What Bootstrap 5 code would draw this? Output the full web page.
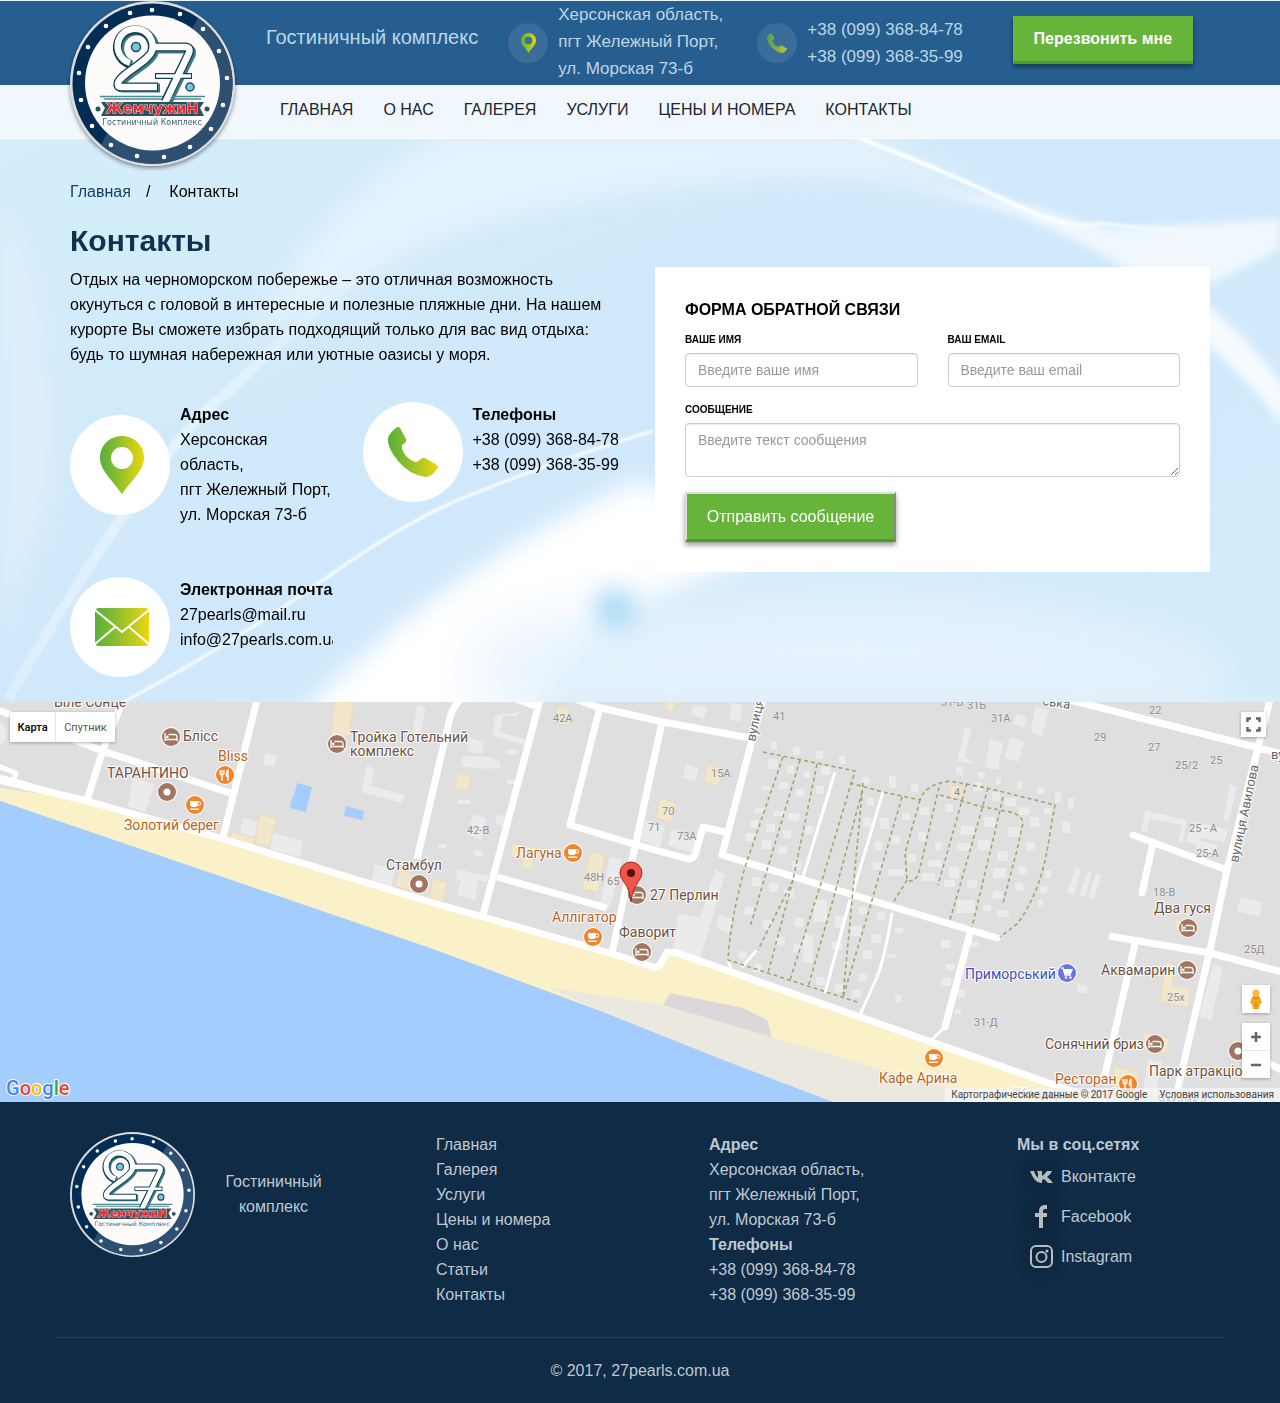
<!DOCTYPE html>
<html lang="ru">
<head>
<meta charset="utf-8">
<meta name="viewport" content="width=device-width, initial-scale=1">
<title>Контакты</title>
<link href="https://cdn.jsdelivr.net/npm/bootstrap@5.3.0/dist/css/bootstrap.min.css" rel="stylesheet">
<style>
body{font-family:"Liberation Sans",Arial,sans-serif;font-size:16px;line-height:25px;color:#000;background:#102b45}
a{color:inherit;text-decoration:none}
.container,.row{--bs-gutter-x:30px}
.container{max-width:1170px}
.topbar{background:#265f8f;border-top:1px solid #eaf6fd;color:#bfd5e6;height:85px}
.topbar .container{padding-left:211px}
.brand-title{font-size:20px;margin:0 30px 12px 0}
.top-info{font-size:17px;line-height:27px;gap:10px}
.top-address{margin-right:34px}
.top-phone{margin-right:50px}
.round-sm{width:40px;height:40px;background:#3a6d9a}
.brand-logo{position:absolute;top:0;left:15px;width:165px;height:165px;border-radius:50%;box-shadow:0 2px 4px rgba(0,0,0,.45);z-index:3}
.btn-call,.btn-send{background:#66b53a;color:#fff;border-radius:0;line-height:24px}
.btn-call{font-weight:700;border:0;border-bottom:3px solid #509a2b;width:180px;height:48px;padding:0;margin-bottom:6px;box-shadow:0 3px 5px rgba(0,0,0,.4)}
.btn-call:hover,.btn-send:hover{background:#5aa632;color:#fff}
.mainnav{background:#f0f8fe;border-bottom:1px solid #fff;height:54px}
.mainnav .nav{gap:30px;padding-left:210px}
.mainnav .nav-link{color:#1c242c;padding:12px 0 16px}
.page{background:#d3eafa;position:relative;overflow:hidden;padding:40px 0 25px}
.page-bg{position:absolute;inset:0;width:100%;height:100%}
.crumbs{gap:15px}
.crumbs a{color:#173f61}
h1{font-size:30px;line-height:33px;font-weight:700;color:#12314f;margin:20px 0 10px}
.contact-grid{margin-top:35px;row-gap:50px}
.round-lg{width:100px;height:100px;background:#fff;flex:none}
.contact-item{gap:10px}
.contact-text{min-width:0;overflow:hidden}
.feedback{background:#fff;padding:30px}
.feedback h2{font-size:16px;line-height:25px;font-weight:700;margin:0 0 10px}
.feedback label{display:block;font-size:10px;line-height:15px;font-weight:700;margin-bottom:6px}
.feedback .message-label{margin-top:15px}
.feedback .form-control{height:34px;border:1px solid #ccc;border-radius:4px;padding:6px 12px;font-size:14px;line-height:20px;box-shadow:inset 0 1px 1px rgba(0,0,0,.075)}
.feedback textarea.form-control{height:54px;resize:vertical}
.feedback .form-control::placeholder{color:#999}
.btn-send{display:block;border:2px outset #ddd;border-bottom:3px solid #509a2b;width:211px;height:50px;padding:0;margin-top:15px;box-shadow:0 3px 5px rgba(0,0,0,.4)}
.map{height:400px;position:relative;overflow:hidden;font-family:Roboto,sans-serif}
.map-canvas{display:block;width:100%;height:100%}
.poi{font-size:14px;fill:#6d5140;stroke:#fff;stroke-width:2px;paint-order:stroke;stroke-linejoin:round}
.poi-food{fill:#b8631a}
.poi-shop{fill:#3c50c0}
.num{font-size:11px;fill:#8d8d8d;stroke:#eee;stroke-width:1px;paint-order:stroke}
.street{font-size:13px;fill:#666;stroke:#fff;stroke-width:2px;paint-order:stroke}
.glogo{font-size:20px;font-weight:500;stroke:#fff;stroke-width:2px;paint-order:stroke}
.map-ctl{position:absolute;box-shadow:0 1px 3px rgba(0,0,0,.3);background:#fff}
.map-ctl button{border:0;background:#fff;padding:0;font-size:11px;line-height:29px;height:30px;display:block;color:#565656}
.ctl-type{top:10px;left:10px;height:30px}
.ctl-type .type-map{width:45px;font-weight:500;color:#000}
.ctl-type .type-sat{width:60px;border-left:1px solid #e6e6e6}
.ctl-full{top:10px;right:14px}
.ctl-full button{width:25px;height:25px}
.ctl-man{right:10px;bottom:89px}
.ctl-man button{width:28px;height:28px}
.ctl-zoom{right:10px;bottom:24px}
.ctl-zoom button{width:28px;height:27px}
.ctl-zoom .zoom-out{border-top:1px solid #e6e6e6;height:28px}
.map-ctl svg{display:block;margin:auto}
.map-legal{position:absolute;right:0;bottom:0;background:rgba(245,245,245,.75);font-size:10px;line-height:14px;color:#444;padding:0 6px;gap:12px}
.foot{background:#102b45;color:#bfc8d1;padding:30px 0 20px}
.foot-grid{display:grid;grid-template-columns:366fr 273fr 308fr 193fr}
.foot-logo{width:125px;height:125px;flex:none}
.foot-brand{gap:30px}
.foot-name{width:97px;padding-top:37px}
.social{gap:15px;padding:7px 0 0 13px}
.social a{gap:8px}
.social-icon{display:flex;border-radius:50%;box-shadow:0 0 10px 6px #0d273f;background:#0d273f}
.foot-line{border-top:1px solid #263f57;margin-top:30px;padding-top:20px}
</style>
<script src="https://cdn.jsdelivr.net/npm/bootstrap@5.3.0/dist/js/bootstrap.bundle.min.js"></script>
</head>
<body>

<svg width="0" height="0" class="position-absolute" aria-hidden="true">
  <defs>
    <linearGradient id="lime"><stop offset="0" stop-color="#58b03a"/><stop offset=".35" stop-color="#84bc30"/><stop offset="1" stop-color="#ecd70e"/></linearGradient>
    <symbol id="logo" viewBox="0 0 165 165">
      <circle cx="82.500" cy="82.500" r="82.500" fill="#dcdcdc"/>
      <circle cx="82.500" cy="82.500" r="80" fill="#042d55"/>
      <path d="M128 17A80 80 0 1 1 31 144L41 125L118 35Z" fill="#2d4f72"/>
      <circle cx="82.500" cy="82" r="67.500" fill="#fdfcfb"/>
      <g fill="#fff"><circle cx="82" cy="9" r="2.300"/><circle cx="110" cy="13" r="2.300"/><circle cx="133" cy="28" r="2.300"/><circle cx="149" cy="50" r="2.300"/><circle cx="157" cy="77" r="2.300"/><circle cx="153" cy="104" r="2.300"/><circle cx="141" cy="128" r="2.300"/><circle cx="120" cy="146" r="2.300"/><circle cx="94" cy="156" r="2.300"/><circle cx="67" cy="155" r="2.300"/><circle cx="41" cy="144" r="2.300"/><circle cx="22" cy="125" r="2.300"/><circle cx="11" cy="99" r="2.300"/><circle cx="9" cy="72" r="2.300"/><circle cx="18" cy="46" r="2.300"/><circle cx="36" cy="25" r="2.300"/><circle cx="60" cy="12" r="2.300"/></g>
      <g fill="none" stroke-linejoin="round">
        <g stroke="#3b7a86" stroke-width="9"><path d="M62 64A17.500 17.500 0 1 1 84 52C80 63 52 75 50 84Q49 87 53 87H90"/><path d="M83 48H117Q123 48 121 54L97 103"/></g>
        <g stroke="#123f50" stroke-width="9"><path d="M60 63A17.500 17.500 0 1 1 82 50C78 61 50 73 48 82Q47 86 51 86H88"/><path d="M80 46H115Q121 46 119 52L95 101"/><path d="M85 75H122" stroke-width="6"/></g>
        <g stroke="#fff" stroke-width="6.500"><path d="M60 62A17.500 17.500 0 1 1 82 50C78 61 50 73 48 82Q47 86 51 86H87"/><path d="M81 46H115Q121 46 119 52L95 102"/><path d="M86 75H121" stroke-width="3.500"/></g>
      </g>
      <circle cx="67" cy="46" r="10" fill="#fdfcfb"/>
      <circle cx="66" cy="46" r="4.500" fill="#7cc5dc" stroke="#1c4b5a" stroke-width="1.500"/>
      <circle cx="120" cy="86" r="4" fill="#7cc5dc" stroke="#1c4b5a" stroke-width="1.500"/>
      <path d="M30 95.500H93M102 95.500H135M34 98H91M101 98H131" stroke="#4d8991" stroke-width="1.500"/>
      <path d="M31 101H134L130 107L134 115H31L35 107Z" fill="#25535f"/>
      <circle cx="28" cy="108" r="2.500" fill="#25535f"/><circle cx="137" cy="108" r="2.500" fill="#25535f"/>
      <text x="82" y="112" text-anchor="middle" font-family="DejaVu Sans,sans-serif" font-weight="700" font-size="14" fill="#e62e36" stroke="#f4dada" stroke-width="1" paint-order="stroke">ЖемчужиН</text>
      <text x="82" y="124" text-anchor="middle" font-family="DejaVu Sans,sans-serif" font-size="8" fill="#3d6472">Гостиничный Комплекс</text>
    </symbol>
    <symbol id="pin" viewBox="0 0 44 58"><path fill="url(#lime)" fill-rule="evenodd" d="M22 0C9.500 0 0 9.500 0 22C0 34 12 44 22 58C32 44 44 34 44 22C44 9.500 34.500 0 22 0ZM22 11A11 11 0 1 1 22 33A11 11 0 0 1 22 11Z"/></symbol>
    <symbol id="tel" viewBox="0 0 50 50"><path fill="url(#lime)" d="M8 1Q10-1 12 1L18 12Q19 14 17 16L14 18Q13 22 18 29Q24 35 29 35L33 32Q35 30 37 31L49 38Q51 40 49 42Q44 50 37 50Q22 48 10 34Q-1 20 0 11Q2 5 8 1Z"/></symbol>
    <symbol id="bed" viewBox="-10 -10 20 20"><circle r="10" fill="#fff"/><circle r="9" fill="#a1755f"/><path d="M-6-4V4M-6 2.500H6V4M-2.500-2.500H3Q6-2.500 6 0V2.500" stroke="#fff" stroke-width="1.300" fill="none"/><circle cx="-3.700" cy="-.200" r="1.400" fill="#fff"/></symbol>
    <symbol id="spot" viewBox="-10 -10 20 20"><circle r="10" fill="#fff"/><circle r="9" fill="#a1755f"/><circle r="3.500" fill="#fff"/></symbol>
    <symbol id="cup" viewBox="-10 -10 20 20"><circle r="10" fill="#fff"/><circle r="9" fill="#f0852a"/><path d="M-5-4H3V-1Q3 2 0 2H-2Q-5 2-5-1ZM-5 3.500H4V5H-5Z" fill="#fff"/><circle cx="4" cy="-1.500" r="1.700" fill="none" stroke="#fff"/></symbol>
    <symbol id="fork" viewBox="-10 -10 20 20"><circle r="10" fill="#fff"/><circle r="9" fill="#f0852a"/><path d="M-3 6V-1M-5-5V-2Q-5 0-3 0Q-1 0-1-2V-5M-3-5V0M3 6V-5Q1-4 1.500 1H3" stroke="#fff" stroke-width="1.300" fill="none"/></symbol>
    <symbol id="cart" viewBox="-10 -10 20 20"><circle r="10" fill="#fff"/><circle r="9" fill="#6a76dc"/><path d="M-6-5H-4L-2 2H4" stroke="#fff" stroke-width="1.300" fill="none"/><path d="M-4-4H6L4 1H-2Z" fill="#fff"/><circle cx="-1" cy="4.500" r="1.200" fill="#fff"/><circle cx="3.500" cy="4.500" r="1.200" fill="#fff"/></symbol>
  </defs>
</svg>

<header>
  <div class="topbar">
    <div class="container h-100 d-flex align-items-center position-relative">
      <a href="#" class="brand-logo" aria-label="27 Жемчужин"><svg class="d-block w-100 h-100"><use href="#logo"/></svg></a>
      <div class="brand-title text-nowrap">Гостиничный комплекс</div>
      <div class="top-info top-address d-flex align-items-center">
        <span class="round-sm rounded-circle d-flex align-items-center justify-content-center"><svg width="15" height="20"><use href="#pin"/></svg></span>
        <div class="text-nowrap mb-1">Херсонская область,<br>пгт Жележный Порт,<br>ул. Морская 73-б</div>
      </div>
      <div class="top-info top-phone d-flex align-items-center">
        <span class="round-sm rounded-circle d-flex align-items-center justify-content-center"><svg width="20" height="20" opacity=".8"><use href="#tel"/></svg></span>
        <div class="text-nowrap">+38 (099) 368-84-78<br>+38 (099) 368-35-99</div>
      </div>
      <button type="button" class="btn btn-call">Перезвонить мне</button>
    </div>
  </div>
  <nav class="mainnav">
    <div class="container">
      <ul class="nav">
        <li><a class="nav-link" href="#">ГЛАВНАЯ</a></li>
        <li><a class="nav-link" href="#">О НАС</a></li>
        <li><a class="nav-link" href="#">ГАЛЕРЕЯ</a></li>
        <li><a class="nav-link" href="#">УСЛУГИ</a></li>
        <li><a class="nav-link" href="#">ЦЕНЫ И НОМЕРА</a></li>
        <li><a class="nav-link" href="#">КОНТАКТЫ</a></li>
      </ul>
    </div>
  </nav>
</header>

<main class="page">
  <svg class="page-bg" viewBox="0 0 1280 563" preserveAspectRatio="none" aria-hidden="true">
    <defs>
      <filter id="b30" x="-50%" y="-50%" width="200%" height="200%"><feGaussianBlur stdDeviation="30"/></filter>
      <filter id="b12" x="-50%" y="-50%" width="200%" height="200%"><feGaussianBlur stdDeviation="12"/></filter>
      <filter id="b5" x="-50%" y="-50%" width="200%" height="200%"><feGaussianBlur stdDeviation="5"/></filter>
      <filter id="b1" x="-20%" y="-20%" width="140%" height="140%"><feGaussianBlur stdDeviation="1"/></filter>
      <linearGradient id="sky" x1="0" y1="0" x2="1" y2="1"><stop offset="0" stop-color="#d5eefa"/><stop offset=".5" stop-color="#cfe8fb"/><stop offset="1" stop-color="#d3edfb"/></linearGradient>
      <linearGradient id="fadeUp" gradientUnits="userSpaceOnUse" x1="10" y1="560" x2="450" y2="100"><stop offset="0" stop-color="#fff" stop-opacity=".3"/><stop offset=".5" stop-color="#fff" stop-opacity=".45"/><stop offset="1" stop-color="#fff" stop-opacity="0"/></linearGradient>
      <linearGradient id="fadeRight" gradientUnits="userSpaceOnUse" x1="850" y1="0" x2="1260" y2="90"><stop offset="0" stop-color="#fff"/><stop offset=".5" stop-color="#fff" stop-opacity=".9"/><stop offset="1" stop-color="#fff" stop-opacity="0"/></linearGradient>
    </defs>
    <rect width="1280" height="563" fill="url(#sky)"/>
    <path d="M250 200Q320 50 460-10H860L1010 70Q860 20 700 45Q480 70 380 130Z" fill="#e4f3fd" filter="url(#b12)"/>
    <path d="M0 60Q60 160 50 360L0 500Z" fill="#deeffc" filter="url(#b12)"/>
    <path d="M280 600Q420 440 640 340L760 420Q560 480 520 600Z" fill="#fff" filter="url(#b12)"/>
    <path d="M480 500Q900 400 1220 520V573H480Z" fill="#e6f3fd" filter="url(#b30)"/>
    <path d="M900 45L1003 60L1110 90L1280 80V110L1200 150V260L1126 130Q1030 70 900 45Z" fill="#f0f8fe" filter="url(#b5)"/>
    <path d="M1200 160Q1250 200 1285 250V290Q1250 240 1200 200Z" fill="#fff" opacity=".8" filter="url(#b5)"/>
    <path d="M8 560Q60 470 122 378T229 252Q300 180 450 60" fill="none" stroke="url(#fadeUp)" stroke-width="10" filter="url(#b1)"/>
    <g fill="none" filter="url(#b1)">
      <path d="M120 565Q240 500 326 439T473 355Q560 320 653 292" stroke="#fff" stroke-width="3" opacity=".9"/>
      <path d="M848-5Q930 25 1003 60T1100 84Q1180 96 1280 88" stroke="url(#fadeRight)" stroke-width="4"/>
    </g>
    <circle cx="615" cy="470" r="20" fill="#a9d9f4" filter="url(#b12)"/>
  </svg>
  <div class="container position-relative">
    <nav class="crumbs d-flex" aria-label="Навигация"><a href="#">Главная</a><span>/</span><span class="ps-1">Контакты</span></nav>
    <h1>Контакты</h1>
    <div class="row">
      <div class="col-md-6">
        <p class="m-0">Отдых на черноморском побережье – это отличная возможность окунуться с головой в интересные и полезные пляжные дни. На нашем курорте Вы сможете избрать подходящий только для вас вид отдыха: будь то шумная набережная или уютные оазисы у моря.</p>
        <div class="row contact-grid">
          <div class="col-6">
            <div class="contact-item d-flex">
              <span class="round-lg rounded-circle d-flex align-self-center align-items-center justify-content-center ps-1"><svg width="44" height="58"><use href="#pin"/></svg></span>
              <div class="contact-text"><b>Адрес</b><br>Херсонская область,<br><span class="text-nowrap">пгт Жележный Порт,</span><br>ул. Морская 73-б</div>
            </div>
          </div>
          <div class="col-6">
            <div class="contact-item d-flex">
              <span class="round-lg rounded-circle d-flex align-items-center justify-content-center"><svg width="50" height="50"><use href="#tel"/></svg></span>
              <div class="text-nowrap"><b>Телефоны</b><br>+38 (099) 368-84-78<br>+38 (099) 368-35-99</div>
            </div>
          </div>
          <div class="col-6">
            <div class="contact-item d-flex">
              <span class="round-lg rounded-circle d-flex align-items-center justify-content-center ps-1"><svg width="54" height="38" viewBox="0 0 54 38"><rect width="54" height="38" rx="4" fill="url(#lime)"/><path d="M0 2L27 24L54 2M0 36L20 19M54 36L34 19" stroke="#fff" stroke-width="2" fill="none"/></svg></span>
              <div class="contact-text text-nowrap"><b>Электронная почта</b><br><a href="#">27pearls@mail.ru</a><br><a href="#">info@27pearls.com.ua</a></div>
            </div>
          </div>
        </div>
      </div>
      <div class="col-md-6">
        <form class="feedback">
          <h2>ФОРМА ОБРАТНОЙ СВЯЗИ</h2>
          <div class="row">
            <div class="col-6"><label for="fname">ВАШЕ ИМЯ</label><input id="fname" type="text" class="form-control" placeholder="Введите ваше имя"></div>
            <div class="col-6"><label for="fmail">ВАШ EMAIL</label><input id="fmail" type="email" class="form-control" placeholder="Введите ваш email"></div>
          </div>
          <label for="fmsg" class="message-label">СООБЩЕНИЕ</label>
          <textarea id="fmsg" class="form-control" placeholder="Введите текст сообщения"></textarea>
          <button type="submit" class="btn btn-send">Отправить сообщение</button>
        </form>
      </div>
    </div>
  </div>
</main>

<section class="map" aria-label="Карта">
  <svg class="map-canvas" viewBox="0 0 1280 400" preserveAspectRatio="xMidYMid slice">
    <rect width="1280" height="400" fill="#e0dfe0"/>
    <!-- shore and sea -->
    <path d="M0 86L83 98L220 135L430 200L610 251L653 265L667 250L860 315L1063 388L1100 400H833L603 310L430 246L0 99Z" fill="#fbf1c9"/>
    <path d="M547 285L663 303L670 291L767 318L772 335L860 361L947 386L990 400H833L603 310Z" fill="#ebe8df"/>
    <path d="M663 303L670 291L743 306L767 318L772 335Z" fill="#dcd8da"/>
    <path d="M0 99L430 246L603 310L720 357L833 400H0Z" fill="#a3ccff"/>
    <!-- buildings -->
    <g fill="#ebebeb">
      <path d="M133 76L155 82L145 111L128 104ZM265 50L277 54L274 65L263 62ZM243 116L258 120L254 135L240 131ZM273 131L303 139L300 155L270 147ZM367 63L374 67L371 84L405 93L402 101L361 90ZM375 162L395 167L391 186L371 180ZM417 3L426 5L420 35H412ZM495 14L520 10L516 14L503 14L500 30L526 37L524 43L492 34ZM470 36L484 40L482 52L467 49ZM462 56Q480 50 500 60L500 66Q480 68 462 64ZM473 112L486 116L481 138L467 132ZM497 112L507 115L503 124L495 122ZM457 167L489 174L487 180L478 178L475 198L457 193L461 178L456 176ZM686 62L698 66L695 80L683 75ZM645 118L665 124L660 145L640 138ZM672 127L700 135L695 152L668 143ZM610 155L622 158L610 205L600 202ZM715 168L725 172L700 258L673 250L678 211L700 216ZM719 213L733 217L729 231L716 226ZM693 3L707 5L704 17L690 12ZM732 1L742 3L740 20L729 17ZM965 25L971 28L965 55L975 62L957 60ZM990 37L1003 41L998 68L985 65ZM1010 35L1025 40L1018 60L1005 56ZM1035 5L1049 8L1042 35L1031 30ZM1016 12L1027 15L1024 26L1013 22ZM1076 165L1081 168L1074 193L1067 190ZM1088 170L1092 171L1085 195L1079 193ZM1096 171L1101 173L1094 197L1088 195ZM1145 108L1187 118L1183 140L1178 140L1182 123L1150 117L1147 130H1141ZM1192 119L1228 128L1224 140L1200 136V144L1186 140ZM1198 138L1218 143L1215 155L1195 150ZM1230 82L1237 84L1229 120L1223 118ZM1241 195L1262 200L1259 215L1237 209ZM1213 262L1223 266L1211 318L1199 315ZM1148 357L1162 360L1155 395L1143 390ZM1078 281L1088 284L1086 292L1077 290ZM0 20Q10 30 4 40L0 42Z"/>
      <path d="M771 40h6v8h-6zM793 45h7v8h-7zM816 49h7v8h-7zM839 54h6v8h-6zM768 57h9v10h-9zM787 64h7v8h-7zM804 69h6v7h-6zM821 65h9v8h-9zM762 84h8v4h-8zM779 80h9v7h-9zM796 87h8v8h-8zM816 84h8v8h-8zM755 106h9v5h-9zM774 109h11v5h-11zM788 111h11v8h-11zM750 118h8v8h-8zM766 122h9v8h-9zM783 128h8v8h-8zM805 124h8v8h-8zM746 131h9v8h-9zM762 138h9v9h-9zM778 144h9v8h-9zM792 159h9v9h-9zM752 175h9v9h-9zM769 181h9v9h-9zM784 187h10v9h-10zM745 205h8v8h-8zM763 218h9v9h-9zM795 216h9v9h-9zM776 235h9v8h-9zM793 242h9v8h-9zM814 198h13v22h-13zM835 214h10v12h-10zM803 233h10v28h-10zM832 240h10v8h-10zM816 275h9v8h-9zM835 282h8v8h-8zM739 249h8v8h-8zM754 262h8v8h-8zM862 75h7v7h-7zM889 74h7v12h-7zM911 82h7v8h-7zM867 96h7v8h-7zM880 116h9v11h-9zM863 116h8v9h-8zM902 111h8v7h-8zM920 105h9v8h-9zM945 102h8v8h-8zM974 80h8v9h-8zM992 90h8v9h-8zM1005 96h11v8h-11zM1019 105h10v8h-10zM1044 106h7v6h-7zM1055 90h6v10h-6zM1068 96h6v11h-6zM1062 120h8v11h-8zM875 139h7v9h-7zM892 134h8v8h-8zM918 130h8v9h-8zM935 140h7v8h-7zM961 124h13v9h-13zM984 115h11v10h-11zM1008 125h12v10h-12zM1030 115h9v10h-9zM957 141h13v8h-13zM978 138h12v10h-12zM998 149h10v10h-10zM1026 140h9v9h-9zM873 160h8v8h-8zM908 152h8v8h-8zM928 158h14v7h-14zM888 167h16v7h-16zM922 171h13v8h-13zM949 165h10v11h-10zM993 166h13v10h-13zM1018 164h8v8h-8zM944 178h11v7h-11zM967 178h10v8h-10zM993 189h10v8h-10zM1015 181h8v8h-8zM1040 184h7v7h-7zM957 198h18v13h-18zM983 203h8v6h-8zM997 208h12v7h-12zM1038 198h5v7h-5zM1045 168h6v8h-6zM858 205h9v7h-9zM877 210h8v8h-8zM851 224h10v10h-10zM871 232h10v9h-10zM895 226h8v5h-8zM863 248h9v9h-9zM887 252h9v4h-9zM859 271h8v8h-8zM852 288h9v8h-9zM895 293h7v7h-7zM941 238h10v8h-10zM970 240h9v5h-9zM946 262h9v6h-9zM942 276h9v8h-9zM958 288h7v8h-7zM955 307h6v5h-6zM438 142h8v4h-8zM474 148h8v6h-8zM506 48h12v4h-12zM507 78h10v4h-10zM458 98h12v4h-12zM956 65h7v8h-7zM978 70h7v7h-7zM996 75h5v7h-5zM1017 79h5v8h-5zM1037 85h7v7h-7z"/>
    </g>
    <g fill="#f3e7cb" stroke="#ead9b0" stroke-width=".7">
      <path d="M335 0H354L349 34H331ZM260 112L277 117L269 145L255 140ZM232 130L255 136L253 145L229 139ZM558 4L570 8L566 23L554 20ZM458 71L471 75L468 89L455 86ZM512 141L535 146L532 168L522 166L523 157L511 155ZM591 150L605 153L598 190L582 187ZM660 96L676 101L671 120L656 116ZM708 63L723 66L719 84L704 80ZM668 0H676L672 10L666 8ZM432 177L447 181L443 200L430 196ZM400 168L412 172L410 188L395 184ZM950 84H962V96H950ZM1166 260L1174 262L1172 283L1190 287L1188 305L1160 300ZM1143 330L1170 337L1167 351L1144 347ZM1114 364L1138 370L1135 385H1112ZM1175 217L1185 220V230L1175 228Z"/>
    </g>
    <path d="M297 81L312 85L306 110L290 106L291 99L295 90ZM346 104L364 109L363 118L344 114Z" fill="#a3ccff"/>
    <!-- roads -->
    <g fill="none" stroke="#fff" stroke-width="7" stroke-linejoin="round">
      <path d="M-2 78L83 98L220 136L430 200L483 215L610 251L653 265Q659 266 661 261L667 250L677 251L860 315L1063 386L1110 402"/>
      <path d="M-2 8L100 48L230 91M123-2L103 48L87 98M257-2L223 135M462-4Q452 4 449 20L417 157M540-2L483 213M500-9L538 5M573-4L597 5L663 20L750 36M600 5L570 123L630 141L688 157Q694 157 696 150L703 125L725 130M662 20L612 251M763-4L722 153L860 195M497 175L607 206M1070-2L1180 26L1267 48L1282 52M1270-2L1227 168L1210 248L1177 390M1109 234L1210 251L1282 270M1135 242L1103 381M1262 358L1282 368"/>
      <path d="M860 195L997 236M1133 133L1227 168M1153 141L1142 191M970 231L945 325" stroke-linecap="round"/>
      <path d="M-2 64L16 71L13 80M0 75L60 92" stroke-width="5"/>
      <path d="M835 70L803 175M850 198L825 291M883 90L853 190M892 211Q885 255 877 275L860 313M757 248L742 265M728 258L732 270M945 325L930 339" stroke-width="3"/>
    </g>
    <g fill="none" stroke="#a3a46c" stroke-width="1.600" stroke-dasharray="4 3">
      <path d="M763 50L855 69L823 175L790 278M783 55L745 165Q730 220 728 258L860 301M800 58L750 225M817 62L793 178L758 248M862 90L833 198L808 285M863 81L843 295M793 178L768 271M850 81L883 90L920 98Q925 82 950 79L987 86L1055 103L1050 131Q1042 190 1017 222L1000 235M902 95L870 205L843 295M920 98L905 151L907 178Q915 182 919 170L940 81M907 178L893 201M940 93L983 105L1010 110Q1022 113 1023 121L1017 148L1003 201M967 81L938 183M988 86L950 218M1003 95L993 138L972 225"/>
    </g>
    <!-- house numbers -->
    <g class="num"><text x="553" y="20">42А</text><text x="773" y="18">41</text><text x="711" y="75">15А</text><text x="662" y="113">70</text><text x="648" y="129">71</text><text x="677" y="138">73А</text><text x="467" y="132">42-В</text><text x="584" y="179">48Н</text><text x="607" y="183">65</text><text x="941" y="4">31-Б</text><text x="967" y="7">31Б</text><text x="991" y="20">31А</text><text x="1149" y="12">22</text><text x="1094" y="39">29</text><text x="1148" y="49">27</text><text x="1175" y="67">25/2</text><text x="1210" y="62">25</text><text x="954" y="94">4</text><text x="1189" y="130">25 - А</text><text x="1196" y="155">25-А</text><text x="1153" y="194">18-В</text><text x="1244" y="251">25Д</text><text x="1167" y="299">25х</text><text x="974" y="324">31-Д</text></g>
    <g class="street"><text transform="translate(1238 161) rotate(-78)">вулиця Авилова</text><text transform="translate(755 40) rotate(-78)">вулиця</text><text x="1271" y="57">ву</text><text transform="translate(1042 3) rotate(8)">ська</text></g>
    <!-- places -->
    <g class="poi">
      <text x="54" y="5">Біле Сонце</text><text x="183" y="39">Блісс</text><text x="107" y="76">ТАРАНТИНО</text><text x="350" y="40">Тройка Готельний</text><text x="350" y="54">комплекс</text><text x="386" y="168">Стамбул</text><text x="650" y="198">27 Перлин</text><text x="619" y="235">Фаворит</text><text x="1101" y="273">Аквамарин</text><text x="1154" y="211">Два гуся</text><text x="1045" y="347">Сонячний бриз</text><text x="1149" y="374">Парк атракціонів</text><text x="1157" y="403">Ямайка</text>
      <g class="poi-food"><text x="218" y="59">Bliss</text><text x="124" y="128">Золотий берег</text><text x="516" y="156">Лагуна</text><text x="552" y="220">Аллігатор</text><text x="879" y="381">Кафе Арина</text><text x="1055" y="382">Ресторан</text><text x="1013" y="397">"Козацька хата"</text></g>
      <text class="poi-shop" x="965" y="277">Приморський</text>
    </g>
    <use href="#bed" x="161" y="25" width="20" height="20"/><use href="#bed" x="327" y="32" width="20" height="20"/><use href="#bed" x="627" y="183" width="20" height="20"/><use href="#bed" x="632" y="240" width="20" height="20"/><use href="#bed" x="1178" y="216" width="20" height="20"/><use href="#bed" x="1177" y="258" width="20" height="20"/><use href="#bed" x="1145" y="332" width="20" height="20"/>
    <use href="#spot" x="157" y="80" width="20" height="20"/><use href="#spot" x="409" y="172" width="20" height="20"/><use href="#spot" x="1228" y="339" width="20" height="20"/>
    <use href="#fork" x="215" y="63" width="20" height="20"/><use href="#fork" x="1118" y="372" width="20" height="20"/>
    <use href="#cup" x="185" y="93" width="20" height="20"/><use href="#cup" x="563" y="141" width="20" height="20"/><use href="#cup" x="583" y="225" width="20" height="20"/><use href="#cup" x="924" y="346" width="20" height="20"/>
    <use href="#cart" x="1057" y="261" width="20" height="20"/>
    <path d="M631 200Q630 188 624 180Q620 175 620 171A11 11 0 0 1 642 171Q642 175 638 180Q632 188 631 200Z" fill="#f0544b" stroke="#a22b25"/><circle cx="631" cy="171" r="4" fill="#5c0f10"/>
    <text class="glogo" x="6" y="393"><tspan fill="#4285f4">G</tspan><tspan fill="#ea4335">o</tspan><tspan fill="#fbbc05">o</tspan><tspan fill="#4285f4">g</tspan><tspan fill="#34a853">l</tspan><tspan fill="#ea4335">e</tspan></text>
  </svg>
  <div class="map-legal d-flex text-nowrap"><span>Картографические данные © 2017 Google</span><a href="#">Условия использования</a></div>
  <div class="map-ctl ctl-type d-flex"><button type="button" class="type-map">Карта</button><button type="button" class="type-sat">Спутник</button></div>
  <div class="map-ctl ctl-full"><button type="button" aria-label="На весь экран"><svg width="15" height="15"><path d="M1.500 5V1.500H5M10 1.500H13.500V5M13.500 10V13.500H10M5 13.500H1.500V10" fill="none" stroke="#666" stroke-width="2.500"/></svg></button></div>
  <div class="map-ctl ctl-man"><button type="button" aria-label="Просмотр улиц"><svg width="14" height="20"><path d="M3 8Q7 5 11 8L13 14L11 15L10 20H4L3 15L1 14Z" fill="#f5a623"/><circle cx="7" cy="4" r="3.500" fill="#fbb733"/><path d="M4 8L7 10L10 8M7 13V20" stroke="#c97c10" fill="none"/></svg></button></div>
  <div class="map-ctl ctl-zoom"><button type="button" aria-label="Увеличить"><svg width="12" height="12"><path d="M6 1V11M1 6H11" stroke="#666" stroke-width="2.500"/></svg></button><button type="button" class="zoom-out" aria-label="Уменьшить"><svg width="12" height="12"><path d="M1 6H11" stroke="#666" stroke-width="2.500"/></svg></button></div>
</section>

<footer class="foot">
  <div class="container">
    <div class="foot-grid">
      <div class="foot-brand d-flex">
        <a href="#" class="foot-logo" aria-label="27 Жемчужин"><svg class="d-block w-100 h-100"><use href="#logo"/></svg></a>
        <div class="foot-name text-center">Гостиничный комплекс</div>
      </div>
      <ul class="list-unstyled m-0">
        <li><a href="#">Главная</a></li><li><a href="#">Галерея</a></li><li><a href="#">Услуги</a></li><li><a href="#">Цены и номера</a></li><li><a href="#">О нас</a></li><li><a href="#">Статьи</a></li><li><a href="#">Контакты</a></li>
      </ul>
      <div><b>Адрес</b><br>Херсонская область,<br>пгт Жележный Порт,<br>ул. Морская 73-б<br><b>Телефоны</b><br>+38 (099) 368-84-78<br>+38 (099) 368-35-99</div>
      <div>
        <b>Мы в соц.сетях</b>
        <div class="social d-flex flex-column">
          <a href="#" class="d-flex align-items-center"><span class="social-icon"><svg width="23" height="23"><path fill="#b9bcbe" d="M0 6H4Q5 10 8 13V8L7 6H12V11Q15 9 17 6H22Q21 9 17 12Q20 14 23 18H18L14 14L12 15V18Q5 19 0 6Z"/></svg></span>Вконтакте</a>
          <a href="#" class="d-flex align-items-center"><span class="social-icon"><svg width="23" height="23"><path fill="#b9bcbe" d="M9 23V12H5V8H9V6Q9 1 14 0H17V4H15Q13 4 13 6V8H17V12H13V23Z"/></svg></span>Facebook</a>
          <a href="#" class="d-flex align-items-center"><span class="social-icon"><svg width="23" height="23"><g fill="none" stroke="#b9bcbe" stroke-width="2"><rect x="1" y="1" width="21" height="21" rx="5"/><circle cx="11.500" cy="12" r="5"/></g><circle cx="17" cy="6" r="1.500" fill="#b9bcbe"/></svg></span>Instagram</a>
        </div>
      </div>
    </div>
  </div>
  <div class="container px-0"><div class="foot-line text-center">© 2017, 27pearls.com.ua</div></div>
</footer>
</body>
</html>
